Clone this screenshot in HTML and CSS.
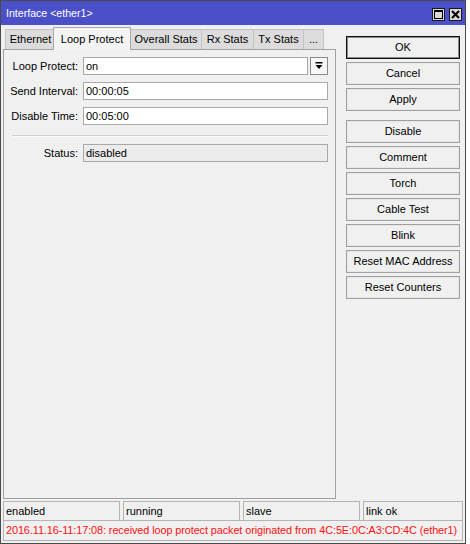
FILE: index.html
```html
<!DOCTYPE html>
<html>
<head>
<meta charset="utf-8">
<link rel="stylesheet" href="styles.css">
</head>
<body>
<div class="window">
  <div class="titlebar">
    <span class="title">Interface &lt;ether1&gt;</span>
    <div class="tbtns">
      <span class="tbtn"><svg width="11" height="11" viewBox="0 0 11 11"><rect x="1.5" y="1.5" width="8" height="8" fill="none" stroke="#000" stroke-width="1"/><rect x="1" y="1" width="9" height="2" fill="#000"/></svg></span>
      <span class="tbtn"><svg width="11" height="11" viewBox="0 0 11 11"><path d="M2 2 L9 9 M9 2 L2 9" stroke="#000" stroke-width="2" fill="none"/></svg></span>
    </div>
  </div>
  <div class="main">
    <div class="left">
      <div class="tabs">
        <div class="tab w-eth">Ethernet</div>
        <div class="tab active w-lp">Loop Protect</div>
        <div class="tab w-os">Overall Stats</div>
        <div class="tab w-rx">Rx Stats</div>
        <div class="tab w-tx">Tx Stats</div>
        <div class="tab w-more">...</div>
      </div>
      <div class="panel">
        <div class="form">
          <div class="label">Loop Protect:</div>
          <div class="combo">
            <div class="field">on</div>
            <div class="ddbtn"><svg width="8" height="8" viewBox="0 0 8 8"><rect x="0.5" y="0" width="7" height="1.5" fill="#000"/><polygon points="0.5,3 7.5,3 4,7" fill="#000"/></svg></div>
          </div>
          <div class="label">Send Interval:</div>
          <div class="field">00:00:05</div>
          <div class="label">Disable Time:</div>
          <div class="field">00:05:00</div>
          <div class="sep"></div>
          <div class="label">Status:</div>
          <div class="field ro">disabled</div>
        </div>
      </div>
    </div>
    <div class="right">
      <div class="btn default">OK</div>
      <div class="btn">Cancel</div>
      <div class="btn">Apply</div>
      <div class="btn gap">Disable</div>
      <div class="btn">Comment</div>
      <div class="btn">Torch</div>
      <div class="btn">Cable Test</div>
      <div class="btn">Blink</div>
      <div class="btn">Reset MAC Address</div>
      <div class="btn">Reset Counters</div>
    </div>
  </div>
  <div class="status">
    <div class="srow">
      <div class="cell">enabled</div>
      <div class="cell">running</div>
      <div class="cell">slave</div>
      <div class="cell last">link ok</div>
    </div>
    <div class="msg">2016.11.16-11:17:08: received loop protect packet originated from 4C:5E:0C:A3:CD:4C (ether1)</div>
  </div>
</div>
</body>
</html>
```
FILE: styles.css
```css
html, body {
  margin: 0;
  padding: 0;
  background: #ffffff;
}
body {
  font-family: "Liberation Sans", Arial, sans-serif;
  font-size: 11px;
  color: #000;
}
.window {
  width: 466px;
  height: 544px;
  box-sizing: border-box;
  border: 1px solid #4a4a4a;
  background: #f0f0f0;
  display: flex;
  flex-direction: column;
}
.titlebar {
  height: 24px;
  flex: none;
  background: #4b50c9;
  color: #fff;
  display: flex;
  align-items: center;
  justify-content: space-between;
  padding: 0 3px 0 5px;
}
.title {
  font-size: 10.6px;
}
.tbtns {
  display: flex;
  gap: 4px;
  padding-top: 2px;
}
.tbtn {
  width: 11px;
  height: 11px;
  border: 1px solid #1a1a1a;
  background: #d8d8d8;
  display: flex;
}
.main {
  flex: 1;
  display: flex;
  padding-left: 2px;
  min-height: 0;
}
.left {
  width: 333px;
  display: flex;
  flex-direction: column;
  padding-top: 2px;
}
.tabs {
  height: 22px;
  display: flex;
  align-items: flex-end;
  padding-left: 2px;
  position: relative;
  z-index: 1;
}
.tab {
  height: 19px;
  box-sizing: content-box;
  border: 1px solid #c4c4c4;
  border-bottom: none;
  background: #dcdcdc;
  text-align: center;
  line-height: 19px;
  margin-right: -1px;
}
.tab.active {
  height: 22px;
  line-height: 22px;
  background: #f4f4f4;
  border-color: #a8a8a8;
  margin: 0 -1px -1px -2px;
  position: relative;
  z-index: 2;
}
.w-eth { width: 49px; }
.w-lp { width: 76px; }
.w-os { width: 70px; }
.w-rx { width: 51px; }
.w-tx { width: 49px; }
.w-more { width: 19px; }
.panel {
  flex: 1;
  border: 1px solid #a0a0a0;
  background: #f0f0f0;
}
.form {
  display: grid;
  grid-template-columns: 74px 1fr;
  column-gap: 5px;
  row-gap: 7px;
  padding: 7px 7px 0 0;
}
.label {
  text-align: right;
  line-height: 18px;
  white-space: nowrap;
}
.combo {
  display: flex;
  gap: 2px;
}
.field {
  flex: 1;
  height: 16px;
  border: 1px solid #a8a8a8;
  background: #fff;
  line-height: 16px;
  padding-left: 2px;
}
.field.ro {
  background: #ececec;
}
.ddbtn {
  width: 16px;
  height: 16px;
  border: 1px solid #8a8a8a;
  background: #f7f7f7;
  display: flex;
  align-items: center;
  justify-content: center;
}
.sep {
  grid-column: 1 / -1;
  margin: 3px 0 0 8px;
  border-top: 1px solid #d0d0d0;
  border-bottom: 1px solid #fafafa;
}
.right {
  display: flex;
  flex-direction: column;
  gap: 3px;
  padding: 11px 0 0 10px;
}
.btn {
  width: 112px;
  height: 21px;
  border: 1px solid #a0a0a0;
  box-shadow: inset 0 0 0 1px #e6e6e6;
  background: #f0f0f0;
  text-align: center;
  line-height: 21px;
}
.btn.default {
  border-color: #111;
  box-shadow: inset 0 0 0 1px #8a8a8a;
}
.btn.gap {
  margin-top: 6px;
}
.status {
  flex: none;
  margin: 2px 2px 2px 2px;
  height: 40px;
}
.srow {
  display: flex;
  gap: 3px;
  height: 20px;
}
.cell {
  width: 113px;
  border: 1px solid #b4b4b4;
  line-height: 18px;
  padding-left: 2px;
  white-space: nowrap;
}
.cell.last {
  flex: 1;
}
.msg {
  margin-top: -1px;
  height: 19px;
  border: 1px solid #b4b4b4;
  line-height: 19px;
  padding-left: 2px;
  color: #ff1010;
  font-size: 10.9px;
  letter-spacing: -0.1px;
  white-space: nowrap;
  overflow: hidden;
}
```
